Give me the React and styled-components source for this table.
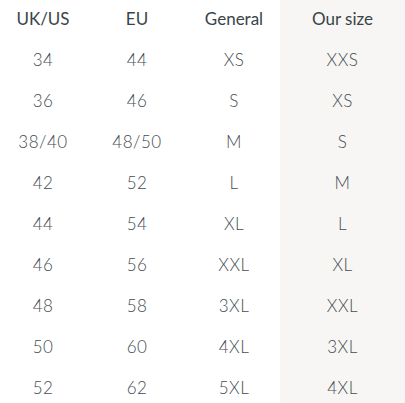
import React from "react";
import styled, { createGlobalStyle } from "styled-components";

const Global = createGlobalStyle`
  html, body { margin: 0; padding: 0; background: #fff; }
  body { font-family: "Lato", "Noto Sans", sans-serif; }
`;

const Table = styled.div`
  display: grid;
  grid-template-columns: 86px 102px 92px 125px;
  width: 405px;
  margin-top: -2px;
`;

const Cell = styled.div`
  height: 41px;
  display: flex;
  align-items: center;
  justify-content: center;
  font-size: 17px;
  font-weight: ${(p) => (p.$head ? 400 : 300)};
  color: ${(p) => (p.$head ? "#3a4448" : "#434d52")};
  background: ${(p) => (p.$hl ? "#f7f6f4" : "transparent")};
  letter-spacing: ${(p) => (p.$head ? "0" : "0.5px")};
`;

const head = ["UK/US", "EU", "General", "Our size"];
const rows = [
  ["34", "44", "XS", "XXS"],
  ["36", "46", "S", "XS"],
  ["38/40", "48/50", "M", "S"],
  ["42", "52", "L", "M"],
  ["44", "54", "XL", "L"],
  ["46", "56", "XXL", "XL"],
  ["48", "58", "3XL", "XXL"],
  ["50", "60", "4XL", "3XL"],
  ["52", "62", "5XL", "4XL"],
];

export default function App() {
  return (
    <>
      <Global />
      <Table>
        {head.map((h, i) => (
          <Cell key={h} $head $hl={i === 3}>{h}</Cell>
        ))}
        {rows.map((r, ri) =>
          r.map((c, ci) => (
            <Cell key={ri + "-" + ci} $hl={ci === 3}>{c}</Cell>
          ))
        )}
      </Table>
    </>
  );
}
